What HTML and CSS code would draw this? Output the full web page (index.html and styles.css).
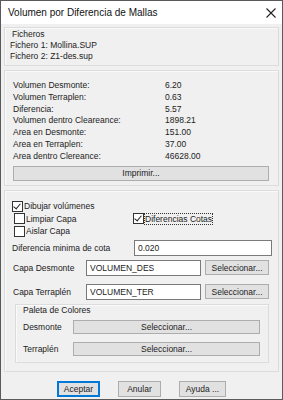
FILE: index.html
```html
<!DOCTYPE html>
<html lang="es">
<head>
    <meta charset="UTF-8">
    <title>Volumen por Diferencia de Mallas</title>
    <link rel="stylesheet" href="styles.css">
</head>
<body>

<div class="dialog">
    <div class="titlebar">
        <span class="title">Volumen por Diferencia de Mallas</span>
        <svg class="close" width="10" height="10" viewBox="0 0 10 10">
            <path d="M0.5 0.5 L9.5 9.5 M9.5 0.5 L0.5 9.5" stroke="#222" stroke-width="1.1" fill="none"/>
        </svg>
    </div>

    <div class="content">
        <div class="group files">
            <div class="files-title">Ficheros</div>
            <div>Fichero 1: Mollina.SUP</div>
            <div>Fichero 2: Z1-des.sup</div>
        </div>

        <div class="group results">
            <div class="stats">
                <span>Volumen Desmonte:</span><span>6.20</span>
                <span>Volumen Terraplen:</span><span>0.63</span>
                <span>Diferencia:</span><span>5.57</span>
                <span>Volumen dentro Cleareance:</span><span>1898.21</span>
                <span>Area en Desmonte:</span><span>151.00</span>
                <span>Area en Terraplen:</span><span>37.00</span>
                <span>Area dentro Clereance:</span><span>46628.00</span>
            </div>
            <button class="button print">Imprimir...</button>
        </div>

        <div class="group options">
            <label class="check main-check"><span class="box checked"></span>Dibujar volúmenes</label>
            <div class="check-row">
                <label class="check"><span class="box"></span>Limpiar Capa</label>
                <label class="check focused"><span class="box checked"></span><span class="focus">Diferencias Cotas</span></label>
            </div>
            <label class="check"><span class="box"></span>Aislar Capa</label>

            <div class="field-row min-row">
                <span class="field-label">Diferencia minima de cota</span>
                <div class="input wide">0.020</div>
            </div>
            <div class="field-row layer-row">
                <span class="field-label short">Capa Desmonte</span>
                <div class="input">VOLUMEN_DES</div>
                <button class="button small">Seleccionar...</button>
            </div>
            <div class="field-row layer-row second">
                <span class="field-label short">Capa Terraplén</span>
                <div class="input">VOLUMEN_TER</div>
                <button class="button small">Seleccionar...</button>
            </div>

            <div class="group palette">
                <div class="palette-title">Paleta de Colores</div>
                <div class="palette-row">
                    <span class="palette-label">Desmonte</span>
                    <button class="button long">Seleccionar...</button>
                </div>
                <div class="palette-row">
                    <span class="palette-label">Terraplén</span>
                    <button class="button long">Seleccionar...</button>
                </div>
            </div>
        </div>

        <div class="actions">
            <button class="button action default">Aceptar</button>
            <button class="button action">Anular</button>
            <button class="button action">Ayuda ...</button>
        </div>
    </div>
</div>

</body>
</html>
```

FILE: styles.css
```css
body {
    margin: 0;
    font-family: "Liberation Sans", Arial, sans-serif;
    font-size: 8.5px;
    color: #222;
    background-color: #f0f0f0;
}
.dialog {
    width: 283px;
    height: 400px;
    box-sizing: border-box;
    border: 1px solid #5a5a5a;
    background-color: #f0f0f0;
    overflow: hidden;
}
.titlebar {
    height: 23px;
    background-color: #fff;
    display: flex;
    align-items: center;
    justify-content: space-between;
    padding: 0 6px 0 7px;
}
.title {
    font-size: 10px;
    color: #111;
}
.close {
    margin-top: 1px;
}
.content {
    padding: 3px 3px 0 3px;
    display: flex;
    flex-direction: column;
}
.group {
    border: 1px solid #dcdcdc;
    box-shadow: inset 1px 1px 0 #fafafa;
}
.files {
    height: 36px;
    padding: 1px 0 0 5px;
    line-height: 11px;
}
.files-title {
    padding-left: 2px;
}
.results {
    margin-top: 4px;
    height: 116px;
    box-sizing: border-box;
    padding: 9px 9px 0 8px;
}
.stats {
    display: grid;
    grid-template-columns: 152px 1fr;
    line-height: 11.8px;
}
.button {
    font-family: inherit;
    font-size: 8.5px;
    color: #222;
    background-color: #e1e1e1;
    border: 1px solid #adadad;
    padding: 0;
    margin: 0;
}
.print {
    display: block;
    width: 100%;
    height: 15px;
    margin-top: 3px;
}
.options {
    margin-top: 4px;
    height: 182px;
    box-sizing: border-box;
    padding: 9px 6px 0 7px;
}
.check {
    display: flex;
    align-items: center;
    height: 12.5px;
}
.box {
    width: 9px;
    height: 9px;
    border: 1px solid #333;
    background-color: #fff;
    margin-right: 1px;
    position: relative;
}
.box.checked::after {
    content: "";
    position: absolute;
    left: 2px;
    top: 0;
    width: 3px;
    height: 6px;
    border: solid #222;
    border-width: 0 1px 1px 0;
    transform: rotate(40deg);
}
.check-row {
    display: flex;
    padding-left: 2px;
}
.check-row .check {
    width: 119px;
}
.check-row .check:last-child {
    width: auto;
}
.options > .check:not(.main-check) {
    padding-left: 2px;
}
.focus {
    outline: 1px dotted #333;
}
.field-row {
    display: flex;
    align-items: center;
}
.min-row {
    margin-top: 2px;
}
.layer-row {
    margin-top: 4px;
    padding-left: 1px;
}
.layer-row.second {
    margin-top: 8px;
}
.field-label {
    width: 123px;
}
.field-label.short {
    width: 73px;
}
.input {
    height: 16px;
    box-sizing: border-box;
    border: 1px solid #7a7a7a;
    background-color: #fff;
    padding: 0 3px;
    line-height: 14px;
}
.input.wide {
    width: 139px;
}
.layer-row .input {
    width: 115px;
}
.small {
    width: 64px;
    height: 15px;
    margin-left: 4px;
}
.palette {
    margin: 4px 3px 0 3px;
    height: 59px;
    box-sizing: border-box;
    padding: 0 8px 0 7px;
}
.palette-title {
    line-height: 11px;
}
.palette-row {
    display: flex;
    align-items: center;
    margin-top: 4px;
}
.palette-row + .palette-row {
    margin-top: 8px;
}
.palette-label {
    width: 50px;
}
.long {
    flex: 1;
    height: 14px;
}
.actions {
    display: flex;
    justify-content: center;
    gap: 18px;
    margin-top: 9px;
}
.action {
    width: 43px;
    height: 16px;
}
.action:last-child {
    width: 47px;
}
.action.default {
    border: 2px solid #0078d7;
}
```
